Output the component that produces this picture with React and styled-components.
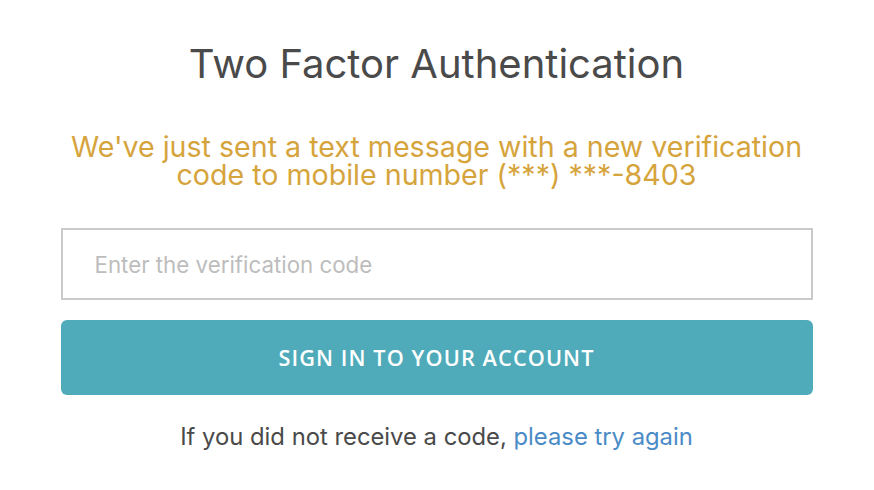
import React from "react";
import styled, { createGlobalStyle } from "styled-components";

const GlobalStyle = createGlobalStyle`
  html, body {
    margin: 0;
    padding: 0;
    background: #fff;
  }
  body {
    font-family: Inter, "Liberation Sans", sans-serif;
  }
`;

const Page = styled.div`
  display: flex;
  justify-content: center;
  padding-top: 40px;
  padding-right: 1px;
`;

const Card = styled.div`
  width: 752px;
  display: flex;
  flex-direction: column;
  align-items: center;
`;

const Title = styled.h1`
  margin: 0;
  font-family: Inter, sans-serif;
  font-weight: 400;
  font-size: 40px;
  line-height: 48px;
  color: #4a4a4a;
`;

const Notice = styled.p`
  margin: 45px 0 0;
  font-family: Inter, sans-serif;
  font-size: 28.6px;
  line-height: 28px;
  color: #d6a43c;
  text-align: center;
  white-space: nowrap;
`;

const CodeInput = styled.input`
  box-sizing: border-box;
  width: 100%;
  height: 72px;
  margin-top: 39px;
  padding: 0 32px;
  border: 2px solid #cacaca;
  border-radius: 0;
  font-family: Inter, sans-serif;
  font-size: 22.3px;
  color: #444;
  outline: none;

  &::placeholder {
    color: #bdbdbd;
  }
`;

const SubmitButton = styled.button`
  width: 100%;
  height: 75px;
  margin-top: 20px;
  border: none;
  border-radius: 6px;
  background: #4fabba;
  color: #fff;
  font-family: "Open Sans", sans-serif;
  font-weight: 600;
  font-size: 21.7px;
  letter-spacing: 1.1px;
  text-transform: uppercase;
  cursor: pointer;
`;

const Footnote = styled.p`
  margin: 28px 0 0;
  font-family: Inter, sans-serif;
  font-size: 23.8px;
  line-height: 28px;
  color: #4a4a4a;
`;

const RetryLink = styled.a`
  color: #4a8bc7;
  text-decoration: none;
`;

export default function App() {
  return (
    <>
      <GlobalStyle />
      <Page>
        <Card>
          <Title>Two Factor Authentication</Title>
          <Notice>
            We've just sent a text message with a new verification
            <br />
            code to mobile number (***) ***-8403
          </Notice>
          <CodeInput placeholder="Enter the verification code" />
          <SubmitButton>Sign in to your account</SubmitButton>
          <Footnote>
            If you did not receive a code,{" "}
            <RetryLink href="#">please try again</RetryLink>
          </Footnote>
        </Card>
      </Page>
    </>
  );
}
